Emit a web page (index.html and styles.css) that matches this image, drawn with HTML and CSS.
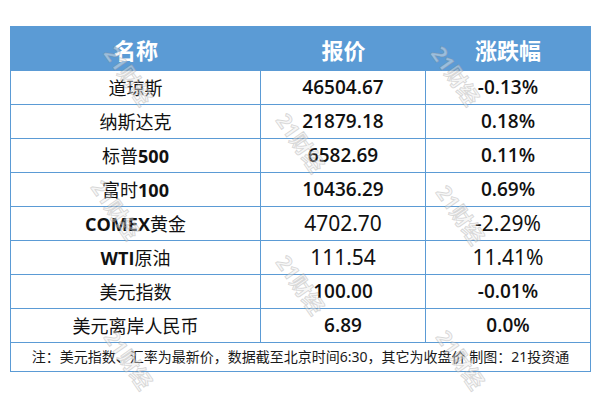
FILE: index.html
```html
<!DOCTYPE html>
<html lang="zh-CN">
<head>
<meta charset="utf-8">
<title>全球市场行情</title>
<link rel="stylesheet" href="styles.css">
</head>
<body>
<div class="page">
  <div class="board">
    <div class="grid">
      <div class="cell head">名称</div>
      <div class="cell head">报价</div>
      <div class="cell head">涨跌幅</div>

      <div class="cell name">道琼斯</div>
      <div class="cell num bold">46504.67</div>
      <div class="cell num bold">-0.13%</div>

      <div class="cell name">纳斯达克</div>
      <div class="cell num bold">21879.18</div>
      <div class="cell num bold">0.18%</div>

      <div class="cell name">标普<b>500</b></div>
      <div class="cell num bold">6582.69</div>
      <div class="cell num bold">0.11%</div>

      <div class="cell name">富时<b>100</b></div>
      <div class="cell num bold">10436.29</div>
      <div class="cell num bold">0.69%</div>

      <div class="cell name"><b>COMEX</b>黄金</div>
      <div class="cell num thin">4702.70</div>
      <div class="cell num thin">-2.29%</div>

      <div class="cell name"><b>WTI</b>原油</div>
      <div class="cell num thin">111.54</div>
      <div class="cell num thin">11.41%</div>

      <div class="cell name">美元指数</div>
      <div class="cell num bold">100.00</div>
      <div class="cell num bold">-0.01%</div>

      <div class="cell name">美元离岸人民币</div>
      <div class="cell num bold">6.89</div>
      <div class="cell num bold">0.0%</div>

      <div class="cell note">注：美元指数、汇率为最新价，数据截至北京时间6:30，其它为收盘价 制图：21投资通</div>
    </div>
    <div class="mark m1">21财经</div>
    <div class="mark m2">21财经</div>
    <div class="mark m3">21财经</div>
    <div class="mark m4">21财经</div>
    <div class="mark m5">21财经</div>
    <div class="mark m6">21财经</div>
    <div class="mark m7">21财经</div>
    <div class="mark m8">21财经</div>
  </div>
</div>
</body>
</html>
```

FILE: styles.css
```css
html, body {
  margin: 0;
  padding: 0;
  background: #ffffff;
}

.page {
  width: 600px;
  height: 406px;
  padding: 26px 0 0 10px;
  box-sizing: border-box;
}

.board {
  position: relative;
  width: 581px;
}

.grid {
  display: grid;
  grid-template-columns: 250px 165px 164px;
  border: 1px solid #5b9bd5;
  font-family: "Noto Sans", "Noto Sans CJK SC", sans-serif;
  color: #111111;
}

.cell {
  display: flex;
  align-items: center;
  justify-content: center;
  box-sizing: border-box;
  height: 34px;
  border-top: 1px solid #5b9bd5;
  border-right: 1px solid #5b9bd5;
  white-space: nowrap;
  line-height: 1;
}

.cell:nth-child(3n) {
  border-right: none;
}

.head {
  height: 43px;
  border-top: none;
  border-right: none;
  background: #5b9bd5;
  color: #ffffff;
  font-size: 22px;
  font-weight: 700;
  font-family: "Noto Sans CJK SC", "Noto Sans", sans-serif;
}

.name {
  font-size: 18px;
  font-weight: 400;
}

.name b {
  font-weight: 700;
  font-family: "Open Sans", "Noto Sans", sans-serif;
}

.num.bold {
  font-family: "Open Sans", "Noto Sans", sans-serif;
  font-size: 19px;
  font-weight: 600;
}

.num.thin {
  font-size: 21px;
  font-weight: 400;
}

.note {
  grid-column: 1 / span 3;
  height: 29px;
  border-right: none;
  font-size: 14px;
  font-weight: 400;
  color: #1a1a1a;
}

.mark {
  position: absolute;
  font-family: "Noto Sans", "Noto Sans CJK SC", sans-serif;
  font-size: 21px;
  font-weight: 700;
  color: rgba(235, 235, 235, 0.45);
  -webkit-text-stroke: 1px rgba(130, 130, 130, 0.28);
  transform: translate(-50%, -50%) rotate(55deg);
  white-space: nowrap;
  pointer-events: none;
  line-height: 1;
}

.m1 { left: 118px; top: 50px; }
.m2 { left: 445px; top: 50px; }
.m3 { left: 290px; top: 117px; }
.m4 { left: 450px; top: 189px; }
.m5 { left: 105px; top: 184px; }
.m6 { left: 290px; top: 259px; }
.m7 { left: 118px; top: 334px; }
.m8 { left: 450px; top: 334px; }
```
